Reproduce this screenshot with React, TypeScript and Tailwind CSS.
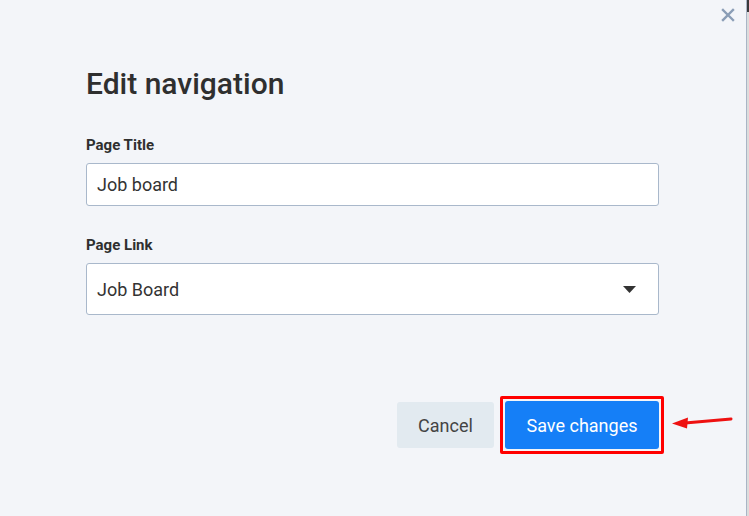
import React from "react";

function CloseIcon() {
  return (
    <svg width="14" height="14" viewBox="0 0 14 14" aria-hidden="true">
      <path d="M2 2 L12 12 M12 2 L2 12" stroke="#8a9db6" strokeWidth="2.4" strokeLinecap="square" />
    </svg>
  );
}

function Caret() {
  return (
    <svg width="13" height="7" viewBox="0 0 13 7" aria-hidden="true">
      <path d="M0 0 H13 L6.5 7 Z" fill="#333" />
    </svg>
  );
}

function PointerArrow() {
  return (
    <svg width="62" height="14" viewBox="0 0 62 14" aria-hidden="true">
      <path d="M60 4 L14 8" stroke="#ee1111" strokeWidth="3" strokeLinecap="round" />
      <path d="M1 8.5 L17 2.5 L16 13.5 Z" fill="#ee1111" />
    </svg>
  );
}

export default function App() {
  return (
    <div
      className="flex h-[516px] w-[749px] overflow-hidden bg-[#dcdcdc]"
      style={{ fontFamily: "Roboto, 'Liberation Sans', Arial, sans-serif" }}
    >
      <div className="relative flex-1 border-r border-[#a9b5c6] bg-[#f3f5f9]">
        <button type="button" className="absolute right-[11px] top-[8px] p-0" aria-label="Close">
          <CloseIcon />
        </button>

        <div className="ml-[86px] w-[573px] pt-[66px]">
          <h2 className="text-[30px] font-medium leading-[36px] text-[#2f2f2f]">Edit navigation</h2>

          <label className="mt-[34px] block text-[15px] font-bold leading-[18px] text-[#2f2f2f]">
            Page Title
          </label>
          <div className="mt-[9px] flex h-[43px] items-center rounded-[3px] border border-[#a9b8cb] bg-white px-[10px] text-[18px] text-[#333]">
            Job board
          </div>

          <label className="mt-[30px] block text-[15px] font-bold leading-[18px] text-[#2f2f2f]">
            Page Link
          </label>
          <div className="mt-[9px] flex h-[52px] items-center justify-between rounded-[3px] border border-[#a9b8cb] bg-white pl-[10px] pr-[22px] text-[18px] text-[#333]">
            <span>Job Board</span>
            <Caret />
          </div>

          <div className="mt-[81px] flex items-center justify-end">
            <button
              type="button"
              className="mr-[6px] h-[46px] w-[97px] rounded-[3px] bg-[#e2eaf0] text-[18px] text-[#444]"
            >
              Cancel
            </button>
            <div className="relative -mr-[5px] rounded-[2px] border-[3px] border-[#ff0000] p-[2px]">
              <button
                type="button"
                className="block h-[48px] w-[154px] rounded-[3px] bg-[#157ff7] text-[18px] text-white"
              >
                Save changes
              </button>
              <span className="absolute left-[168px] top-[16px]">
                <PointerArrow />
              </span>
            </div>
          </div>
        </div>
      </div>
      <div className="w-[2px] border-t-[12px] border-[#3a3a3a]" />
    </div>
  );
}
